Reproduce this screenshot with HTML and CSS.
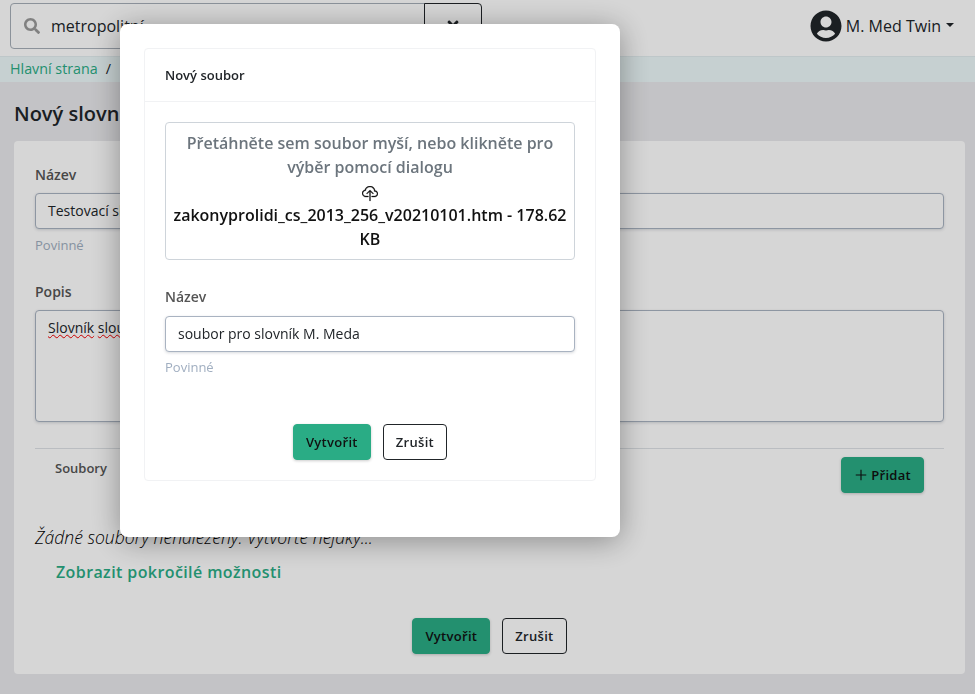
FILE: index.html
```html
<!DOCTYPE html>
<html lang="cs">
<head>
  <meta charset="UTF-8">
  <title>Nový slovník</title>
  <link rel="stylesheet" href="styles.css">
</head>
<body>

  <nav class="navbar">
    <div class="search">
      <div class="search-box">
        <svg class="search-icon" viewBox="0 0 512 512"><path d="M505 442.7L405.3 343c-4.5-4.5-10.6-7-17-7H372c27.6-35.3 44-79.7 44-128C416 93.1 322.9 0 208 0S0 93.1 0 208s93.1 208 208 208c48.3 0 92.7-16.4 128-44v16.3c0 6.4 2.5 12.5 7 17l99.7 99.7c9.4 9.4 24.6 9.4 33.9 0l28.3-28.3c9.4-9.4 9.4-24.6.1-34zM208 336c-70.7 0-128-57.2-128-128 0-70.7 57.2-128 128-128 70.7 0 128 57.2 128 128 0 70.7-57.2 128-128 128z"/></svg>
        <span>metropolitní</span>
      </div>
      <div class="search-clear">
        <svg class="clear-icon" viewBox="0 0 352 512"><path d="M242.72 256l100.07-100.07c12.28-12.28 12.28-32.19 0-44.48l-22.24-22.24c-12.28-12.28-32.19-12.28-44.48 0L176 189.28 75.93 89.21c-12.28-12.28-32.19-12.28-44.48 0L9.21 111.45c-12.28 12.28-12.28 32.19 0 44.48L109.28 256 9.21 356.07c-12.28 12.28-12.28 32.19 0 44.48l22.24 22.24c12.28 12.28 32.2 12.28 44.48 0L176 322.72l100.07 100.07c12.28 12.28 32.2 12.28 44.48 0l22.24-22.24c12.28-12.28 12.28-32.19 0-44.48L242.72 256z"/></svg>
      </div>
    </div>
    <div class="user">
      <svg class="user-icon" viewBox="0 0 496 512"><path d="M248 8C111 8 0 119 0 256s111 248 248 248 248-111 248-248S385 8 248 8zm0 96c48.6 0 88 39.4 88 88s-39.4 88-88 88-88-39.4-88-88 39.4-88 88-88zm0 344c-58.7 0-111.3-26.6-146.5-68.2 18.8-35.4 55.6-59.8 98.5-59.8 2.4 0 4.8.4 7.1 1.1 13 4.2 26.6 6.9 40.9 6.9 14.3 0 28-2.7 40.9-6.9 2.3-.7 4.7-1.1 7.1-1.1 42.9 0 79.7 24.4 98.5 59.8C359.3 421.4 306.7 448 248 448z"/></svg>
      <span>M. Med Twin</span>
      <i class="caret"></i>
    </div>
  </nav>

  <div class="breadcrumb">
    <a href="#">Hlavní strana</a>
    <span class="crumb-sep">/</span>
  </div>

  <main class="page">
    <h1 class="page-title">Nový slovník</h1>
    <div class="card">
      <label class="label">Název</label>
      <div class="input">Testovací slovník</div>
      <div class="hint">Povinné</div>

      <label class="label label-popis">Popis</label>
      <div class="input textarea"><span class="misspelled">Slovník</span> <span class="misspelled">sloužící</span></div>

      <div class="files-head">
        <span class="files-tab">Soubory</span>
        <button class="btn btn-primary btn-add">
          <svg class="plus-icon" viewBox="0 0 16 16"><path d="M8 2v12M2 8h12"/></svg>
          Přidat
        </button>
      </div>

      <p class="empty">Žádné soubory nenalezeny. Vytvořte nějaký...</p>
      <a class="advanced" href="#">Zobrazit pokročilé možnosti</a>

      <div class="actions">
        <button class="btn btn-primary">Vytvořit</button>
        <button class="btn btn-outline">Zrušit</button>
      </div>
    </div>
  </main>

  <div class="backdrop"></div>

  <div class="modal">
    <div class="modal-card">
      <div class="modal-header">Nový soubor</div>
      <div class="modal-body">
        <div class="dropzone">
          <div class="drop-text">Přetáhněte sem soubor myší, nebo klikněte pro výběr pomocí dialogu</div>
          <svg class="cloud-icon" viewBox="0 0 16 16">
            <path fill-rule="evenodd" d="M4.406 1.342A5.53 5.53 0 0 1 8 0c2.69 0 4.923 2 5.166 4.579C14.758 4.804 16 6.137 16 7.773 16 9.569 14.502 11 12.687 11H10a.5.5 0 0 1 0-1h2.688C13.979 10 15 8.988 15 7.773c0-1.216-1.02-2.228-2.313-2.228h-.5v-.5C12.188 2.825 10.328 1 8 1a4.53 4.53 0 0 0-2.941 1.1c-.757.652-1.153 1.438-1.153 2.055v.448l-.445.049C2.064 4.805 1 5.952 1 7.318 1 8.785 2.23 10 3.781 10H6a.5.5 0 0 1 0 1H3.781C1.708 11 0 9.366 0 7.318c0-1.763 1.266-3.223 2.942-3.593.143-.863.698-1.723 1.464-2.383z"/>
            <path fill-rule="evenodd" d="M7.646 4.146a.5.5 0 0 1 .708 0l3 3a.5.5 0 0 1-.708.708L8.5 5.707V14.5a.5.5 0 0 1-1 0V5.707L5.354 7.854a.5.5 0 1 1-.708-.708l3-3z"/>
          </svg>
          <div class="drop-file">zakonyprolidi_cs_2013_256_v20210101.htm - 178.62 KB</div>
        </div>

        <label class="label label-modal">Název</label>
        <div class="input input-modal">soubor pro slovník M. Meda</div>
        <div class="hint hint-modal">Povinné</div>

        <div class="actions actions-modal">
          <button class="btn btn-primary">Vytvořit</button>
          <button class="btn btn-outline">Zrušit</button>
        </div>
      </div>
    </div>
  </div>

</body>
</html>
```

FILE: styles.css
```css
* {
  box-sizing: border-box;
}
body {
  margin: 0;
  height: 694px;
  overflow: hidden;
  font-family: "Open Sans", "Noto Sans", sans-serif;
  font-size: 14px;
  color: #212529;
  background: #e9e9ec;
}
.navbar {
  display: flex;
  align-items: flex-start;
  justify-content: space-between;
  height: 57px;
  padding: 3px 21px 0 10px;
  background: #fff;
  border-bottom: 1px solid #e3eef0;
}
.search {
  display: flex;
  width: 472px;
  height: 46px;
}
.search-box {
  display: flex;
  align-items: center;
  gap: 11px;
  width: 415px;
  padding-left: 13px;
  font-size: 16px;
  background: #fff;
  border: 1px solid #a6aeb8;
  border-radius: 4px 0 0 4px;
}
.search-icon {
  width: 16px;
  height: 16px;
  fill: #9a9a9a;
}
.search-clear {
  display: flex;
  align-items: center;
  justify-content: center;
  flex: 1;
  margin-left: -1px;
  border: 1px solid #212529;
  border-radius: 0 4px 4px 0;
}
.clear-icon {
  width: 12px;
  height: 16px;
  fill: #212529;
}
.user {
  display: flex;
  align-items: center;
  gap: 4px;
  margin-top: 7px;
  font-size: 16px;
}
.user-icon {
  width: 32px;
  height: 32px;
  fill: #212529;
}
.caret {
  width: 0;
  height: 0;
  margin: -2px 0 0 1px;
  border-top: 4px solid #212529;
  border-left: 4px solid transparent;
  border-right: 4px solid transparent;
}
.breadcrumb {
  display: flex;
  align-items: center;
  gap: 8px;
  height: 25px;
  padding: 0 0 2px 10px;
  font-size: 14.3px;
  background: #ecf8f9;
}
.breadcrumb a {
  color: #2aac85;
  text-decoration: none;
}
.crumb-sep {
  color: #212529;
}
.page {
  padding: 0 10px 0 14px;
}
.page-title {
  margin: 18px 0 14px;
  font-size: 20px;
  line-height: 27px;
  font-weight: 600;
}
.card {
  height: 533px;
  padding: 23px 21px 21px;
  background: #fff;
  border-radius: 4px;
}
.label {
  display: block;
  font-size: 14px;
  line-height: 22px;
  font-weight: 600;
  color: #555;
}
.label-popis {
  margin-top: 27px;
}
.input {
  height: 36px;
  margin-top: 7px;
  padding: 0 12px;
  font-size: 14px;
  line-height: 34px;
  color: #212529;
  background: #fff;
  border: 1px solid #a9b3c1;
  border-radius: 4px;
  box-shadow: 0 1px 3px rgba(60, 70, 90, .2);
}
.input-modal {
  margin-top: 8px;
}
.textarea {
  height: 112px;
  line-height: 22px;
  padding-top: 6px;
}
.misspelled {
  text-decoration: underline wavy #f00000 1.2px;
}
.hint {
  margin-top: 7px;
  font-size: 13px;
  line-height: 18px;
  color: #a0aec0;
}
.hint-modal {
  margin-top: 6px;
}
.files-head {
  display: flex;
  align-items: flex-start;
  justify-content: space-between;
  height: 63px;
  margin-top: 26px;
  padding: 8px 20px 0;
  border-top: 1px solid #dee2e6;
}
.files-tab {
  margin-top: 2px;
  font-size: 13px;
  line-height: 18px;
  font-weight: 600;
  color: #555;
}
.btn {
  height: 36px;
  padding: 0 12px;
  font-family: inherit;
  font-size: 13px;
  font-weight: 600;
  letter-spacing: .3px;
  color: #212529;
  background: transparent;
  border: 1px solid #212529;
  border-radius: 4px;
}
.btn-primary {
  color: #111;
  background: #2aac85;
  border-color: #2aac85;
  box-shadow: 0 1px 3px rgba(0, 0, 0, .2);
}
.btn-add {
  display: flex;
  align-items: center;
  gap: 3px;
  margin-top: 0;
}
.plus-icon {
  width: 14px;
  height: 14px;
  fill: none;
  stroke: #111;
  stroke-width: 1.3;
}
.empty {
  margin: 14px 0 0;
  font-size: 17.6px;
  line-height: 24px;
  font-weight: 300;
  font-style: italic;
  color: #000;
}
.advanced {
  display: block;
  margin: 11px 0 0 21px;
  font-size: 16px;
  line-height: 24px;
  font-weight: 600;
  letter-spacing: .4px;
  color: #2aac85;
  text-decoration: none;
}
.actions {
  display: flex;
  justify-content: center;
  gap: 12px;
  margin-top: 34px;
}
.backdrop {
  position: fixed;
  inset: 0;
  background: rgba(0, 0, 0, .16);
}
.modal {
  position: fixed;
  top: 24px;
  left: 120px;
  width: 500px;
  height: 513px;
  padding: 24px;
  background: #fff;
  border-radius: 8px;
  box-shadow: 0 4px 30px rgba(0, 0, 0, .35);
}
.modal-card {
  height: 433px;
  border: 1px solid #f1f2f4;
  border-radius: 4px;
}
.modal-header {
  height: 53px;
  padding-left: 20px;
  font-size: 13px;
  line-height: 52px;
  font-weight: 600;
  border-bottom: 1px solid #f1f2f4;
}
.modal-body {
  padding: 20px 20px 0;
}
.dropzone {
  height: 138px;
  padding: 8px 5px 0;
  text-align: center;
  border: 1px solid #ced4da;
  border-radius: 4px;
}
.drop-text {
  font-size: 16px;
  line-height: 24px;
  font-weight: 600;
  color: #6c757d;
}
.cloud-icon {
  display: block;
  width: 16px;
  height: 16px;
  margin: 7px auto 0;
  fill: #111;
  stroke: #111;
  stroke-width: .3;
}
.drop-file {
  font-size: 16px;
  line-height: 24px;
  font-weight: 600;
  color: #111;
  margin-top: 1px;
}
.label-modal {
  margin-top: 26px;
}
.actions-modal {
  margin-top: 48px;
}
```
